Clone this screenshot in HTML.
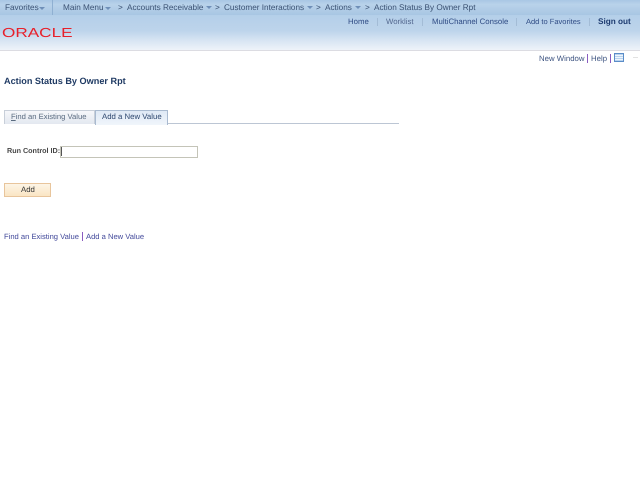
<!DOCTYPE html>
<html><head><meta charset="utf-8"><style>
html,body{margin:0;padding:0;width:640px;height:480px;overflow:hidden;background:#fff;font-family:"Liberation Sans",Arial,sans-serif;text-rendering:geometricPrecision}
.a{position:absolute;white-space:nowrap;font-size:7.8px;line-height:10px}
.nav{color:#3b5273;font-size:8.2px}.top{color:#2f4b84}.lnk{color:#3a4a8c}
.arr{position:absolute;width:0;height:0;border-left:3px solid transparent;border-right:3px solid transparent;border-top:3px solid #6f8fb8}
.sep{position:absolute;width:1px;background:#a3bcd6}
.bar{position:absolute;width:1px;background:#8a5cc0}
</style></head><body>
<div style="position:absolute;left:0;top:0;width:640px;height:15px;background:linear-gradient(#a9c7e4,#b9d2ea 30%,#a8c6e3)"></div>
<div style="position:absolute;left:0;top:15px;width:640px;height:35px;background:linear-gradient(#b4cfe9,#bdd4eb 45%,#d5e3f2 70%,#eef3f9)"></div>
<div style="position:absolute;left:0;top:50px;width:640px;height:1px;background:#dcdce2"></div>
<div class="sep" style="left:52px;top:0;height:15px;background:#8fb0d2"></div>
<div class="a nav" style="left:5px;top:3px">Favorites</div><div class="arr" style="left:39px;top:7px"></div>
<div class="a nav" style="left:63px;top:3px">Main Menu</div><div class="arr" style="left:105px;top:7px"></div>
<div class="a nav" style="left:118px;top:3px">&gt;</div>
<div class="a nav" style="left:127px;top:3px">Accounts Receivable</div><div class="arr" style="left:206px;top:6px"></div>
<div class="a nav" style="left:215px;top:3px">&gt;</div>
<div class="a nav" style="left:224px;top:3px">Customer Interactions</div><div class="arr" style="left:307px;top:6px"></div>
<div class="a nav" style="left:316px;top:3px">&gt;</div>
<div class="a nav" style="left:325px;top:3px">Actions</div><div class="arr" style="left:355px;top:6px"></div>
<div class="a nav" style="left:365px;top:3px">&gt;</div>
<div class="a nav" style="left:374px;top:3px">Action Status By Owner Rpt</div>
<div class="a" style="left:2px;top:25px;font-size:13px;line-height:15px;color:#e8202a;transform:scaleX(1.32);transform-origin:0 0">ORACLE</div>
<div class="a top" style="left:348px;top:17px">Home</div>
<div class="sep" style="left:377px;top:18px;height:8px"></div>
<div class="a top" style="left:386px;top:17px;color:#54688f">Worklist</div>
<div class="sep" style="left:422px;top:18px;height:8px"></div>
<div class="a top" style="left:432px;top:17px">MultiChannel Console</div>
<div class="sep" style="left:516px;top:18px;height:8px"></div>
<div class="a top" style="left:526px;top:17px;font-size:7.5px">Add to Favorites</div>
<div class="sep" style="left:589px;top:18px;height:8px"></div>
<div class="a" style="left:598px;top:17px;font-size:8.2px;font-weight:bold;color:#1d3b70">Sign out</div>
<div class="a lnk" style="left:539px;top:54px;color:#3f5582">New Window</div>
<div class="bar" style="left:587px;top:54px;height:9px"></div>
<div class="a lnk" style="left:591px;top:54px;color:#3f5582">Help</div>
<div class="bar" style="left:610px;top:54px;height:9px"></div>
<div style="position:absolute;left:614px;top:53px;width:8px;height:7px;border:1px solid #5b8dc8;background:repeating-linear-gradient(#b9d3ee 0 1px,#eef5fc 1px 2px)"></div>
<div style="position:absolute;left:633px;top:57px;width:5px;height:1px;background:#e2e2e2"></div>
<div class="a" style="left:4px;top:75px;font-size:9.15px;line-height:12px;font-weight:bold;color:#1f3a63">Action Status By Owner Rpt</div>
<div style="position:absolute;left:4px;top:123px;width:395px;height:1px;background:#bcc6d4"></div>
<div style="position:absolute;left:4px;top:110px;width:89px;height:13px;border:1px solid #c8cfd9;border-bottom:0;background:linear-gradient(#f6f7fa,#e3e8f0)"></div>
<div class="a" style="left:11px;top:112px;font-size:7.65px;color:#5a6b80"><u>F</u>ind an Existing Value</div>
<div style="position:absolute;left:95px;top:110px;width:71px;height:14px;border:1px solid #a9bad0;border-bottom:0;background:linear-gradient(#dfe9f5,#f0f5fb)"></div>
<div class="a" style="left:102px;top:112px;color:#2c466e">Add a New Value</div>
<div class="a" style="left:7px;top:146px;font-weight:bold;font-size:7.2px;color:#444">Run Control ID:</div>
<div style="position:absolute;left:60px;top:146px;width:136px;height:10px;border:1px solid #c4c4b8;background:#fff"></div>
<div style="position:absolute;left:61px;top:147px;width:1px;height:9px;background:#555"></div>
<div style="position:absolute;left:4px;top:183px;width:45px;height:12px;border:1px solid #e8c59c;background:linear-gradient(#fdf5e6,#fae5c4)"></div>
<div class="a" style="left:21px;top:185px;color:#333">Add</div>
<div class="a" style="left:4px;top:232px;font-size:7.6px;color:#41489a">Find an Existing Value</div>
<div class="bar" style="left:82px;top:232px;height:9px"></div>
<div class="a" style="left:86px;top:232px;font-size:7.6px;color:#41489a">Add a New Value</div>
</body></html>
